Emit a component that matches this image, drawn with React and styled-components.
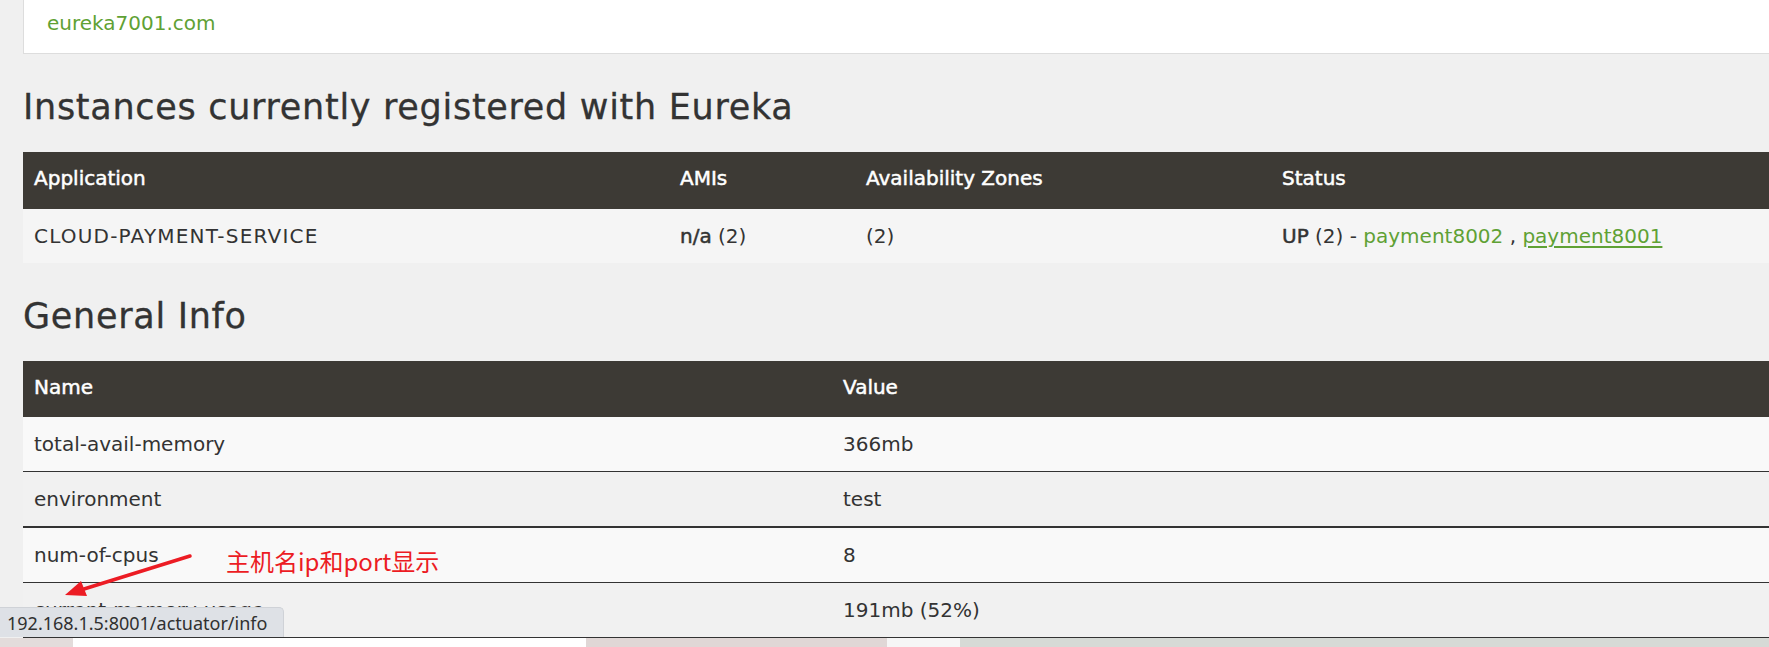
import React from 'react';
import styled, { createGlobalStyle } from 'styled-components';

const GlobalStyle = createGlobalStyle`
    html, body {
        margin: 0;
        padding: 0;
        overflow: hidden;
        background-color: #f0f0f0;
    }
    body {
        font-family: "DejaVu Sans", "Noto Sans", sans-serif;
        font-size: 20px;
        color: #333333;
    }
`;

const Page = styled.div`
    position: relative;
    width: 100vw;
    height: 647px;
    overflow: hidden;
`;

const Content = styled.main`
    margin-left: 23px;
    width: 1800px;
`;

const HostBox = styled.section`
    box-sizing: border-box;
    height: 54px;
    padding: 11px 0 0 23px;
    background-color: #ffffff;
    border-left: 1px solid #dddddd;
    border-bottom: 1px solid #dddddd;
    line-height: 24px;
`;

const Link = styled.a`
    color: #5fa134;
    text-decoration: ${({ $underline }) => ($underline ? 'underline' : 'none')};
    text-underline-offset: 3px;
`;

const Heading = styled.h1`
    margin: 33px 0 25px;
    font-size: 35px;
    font-weight: normal;
    line-height: 40px;
    letter-spacing: 0.7px;
    color: #333333;
    -webkit-text-stroke: 0.3px #333333;
`;

const Table = styled.div`
    display: grid;
    grid-template-columns: ${({ $cols }) => $cols};
`;

const HeadCell = styled.div`
    box-sizing: border-box;
    height: ${({ $h }) => $h}px;
    padding: 0 0 5px 11px;
    display: flex;
    align-items: center;
    background-color: #3d3a35;
    color: #ffffff;
    -webkit-text-stroke: 0.5px #ffffff;
`;

const Cell = styled.div`
    box-sizing: border-box;
    height: ${({ $h }) => $h}px;
    padding-left: 11px;
    display: flex;
    align-items: center;
    white-space: pre;
    letter-spacing: ${({ $caps }) => ($caps ? '1.2px' : 'normal')};
    background-color: ${({ $bg }) => $bg};
    border-bottom: ${({ $line }) => ($line ? `${$line}px solid #333333` : 'none')};
`;

const Strong = styled.span`
    -webkit-text-stroke: 0.5px #333333;
`;

const Strip = styled.div`
    display: flex;
    height: 9px;
`;

const StripPart = styled.div`
    width: ${({ $w }) => ($w ? `${$w}px` : 'auto')};
    flex: ${({ $w }) => ($w ? 'none' : '1')};
    background-color: ${({ $bg }) => $bg};
`;

const StatusBubble = styled.div`
    position: absolute;
    left: 0;
    top: 607px;
    box-sizing: border-box;
    width: 284px;
    height: 30px;
    padding-left: 7px;
    display: flex;
    align-items: center;
    background-color: #dee1e6;
    border-top: 1px solid #cfd2d7;
    border-right: 1px solid #cfd2d7;
    border-top-right-radius: 5px;
    font-family: "Noto Sans", "Noto Sans CJK SC", sans-serif;
    font-size: 18px;
    color: #303030;
`;

const Note = styled.div`
    position: absolute;
    left: 226px;
    top: 547px;
    font-family: "Noto Sans CJK SC", "Noto Sans", sans-serif;
    font-size: 24px;
    line-height: 28px;
    color: #ec1c24;
`;

const ArrowSvg = styled.svg`
    position: absolute;
    left: 0;
    top: 0;
    pointer-events: none;
`;

const instanceRows = [
    { bg: '#f5f5f5' },
];

const infoRows = [
    { name: 'total-avail-memory', value: '366mb', bg: '#f9f9f9', line: 1 },
    { name: 'environment', value: 'test', bg: '#f1f1f1', line: 2 },
    { name: 'num-of-cpus', value: '8', bg: '#f9f9f9', line: 1 },
    { name: 'current-memory-usage', value: '191mb (52%)', bg: '#f1f1f1', line: 1 },
];

const stripParts = [
    { w: 73, bg: '#e3dcdb' },
    { w: 513, bg: '#ffffff' },
    { w: 301, bg: '#e0d7d6' },
    { w: 73, bg: '#f6f6f6' },
    { bg: '#d6dad6' },
];

function App() {
  return (
    <Page>
      <GlobalStyle />
      <Content>
        <HostBox>
          <Link $underline={false}>eureka7001.com</Link>
        </HostBox>

        <Heading>Instances currently registered with Eureka</Heading>
        <Table $cols="646px 186px 416px 1fr">
          <HeadCell $h={57}>Application</HeadCell>
          <HeadCell $h={57}>AMIs</HeadCell>
          <HeadCell $h={57}>Availability Zones</HeadCell>
          <HeadCell $h={57}>Status</HeadCell>
          {instanceRows.map((r, i) => (
            <React.Fragment key={i}>
              <Cell $h={54} $bg={r.bg} $caps>CLOUD-PAYMENT-SERVICE</Cell>
              <Cell $h={54} $bg={r.bg}><Strong>n/a</Strong> (2)</Cell>
              <Cell $h={54} $bg={r.bg}>(2)</Cell>
              <Cell $h={54} $bg={r.bg}>
                <Strong>UP</Strong> (2) - <Link>payment8002</Link> , <Link $underline>payment8001</Link>
              </Cell>
            </React.Fragment>
          ))}
        </Table>

        <Heading>General Info</Heading>
        <Table $cols="809px 1fr">
          <HeadCell $h={56}>Name</HeadCell>
          <HeadCell $h={56}>Value</HeadCell>
          {infoRows.map((r) => (
            <React.Fragment key={r.name}>
              <Cell $h={54 + r.line} $bg={r.bg} $line={r.line}>{r.name}</Cell>
              <Cell $h={54 + r.line} $bg={r.bg} $line={r.line}>{r.value}</Cell>
            </React.Fragment>
          ))}
        </Table>
      </Content>

      <Strip>
        {stripParts.map((p, i) => (
          <StripPart key={i} $w={p.w} $bg={p.bg} />
        ))}
      </Strip>

      <StatusBubble>192.168.1.5:8001/actuator/info</StatusBubble>

      <Note>主机名ip和port显示</Note>
      <ArrowSvg width="260" height="647" viewBox="0 0 260 647">
        <line x1="190" y1="556" x2="84" y2="589" stroke="#ec1c24" strokeWidth="3.5" strokeLinecap="round" />
        <polygon points="65,595 81,581 87,596" fill="#ec1c24" />
      </ArrowSvg>
    </Page>
  );
}

export default App;
